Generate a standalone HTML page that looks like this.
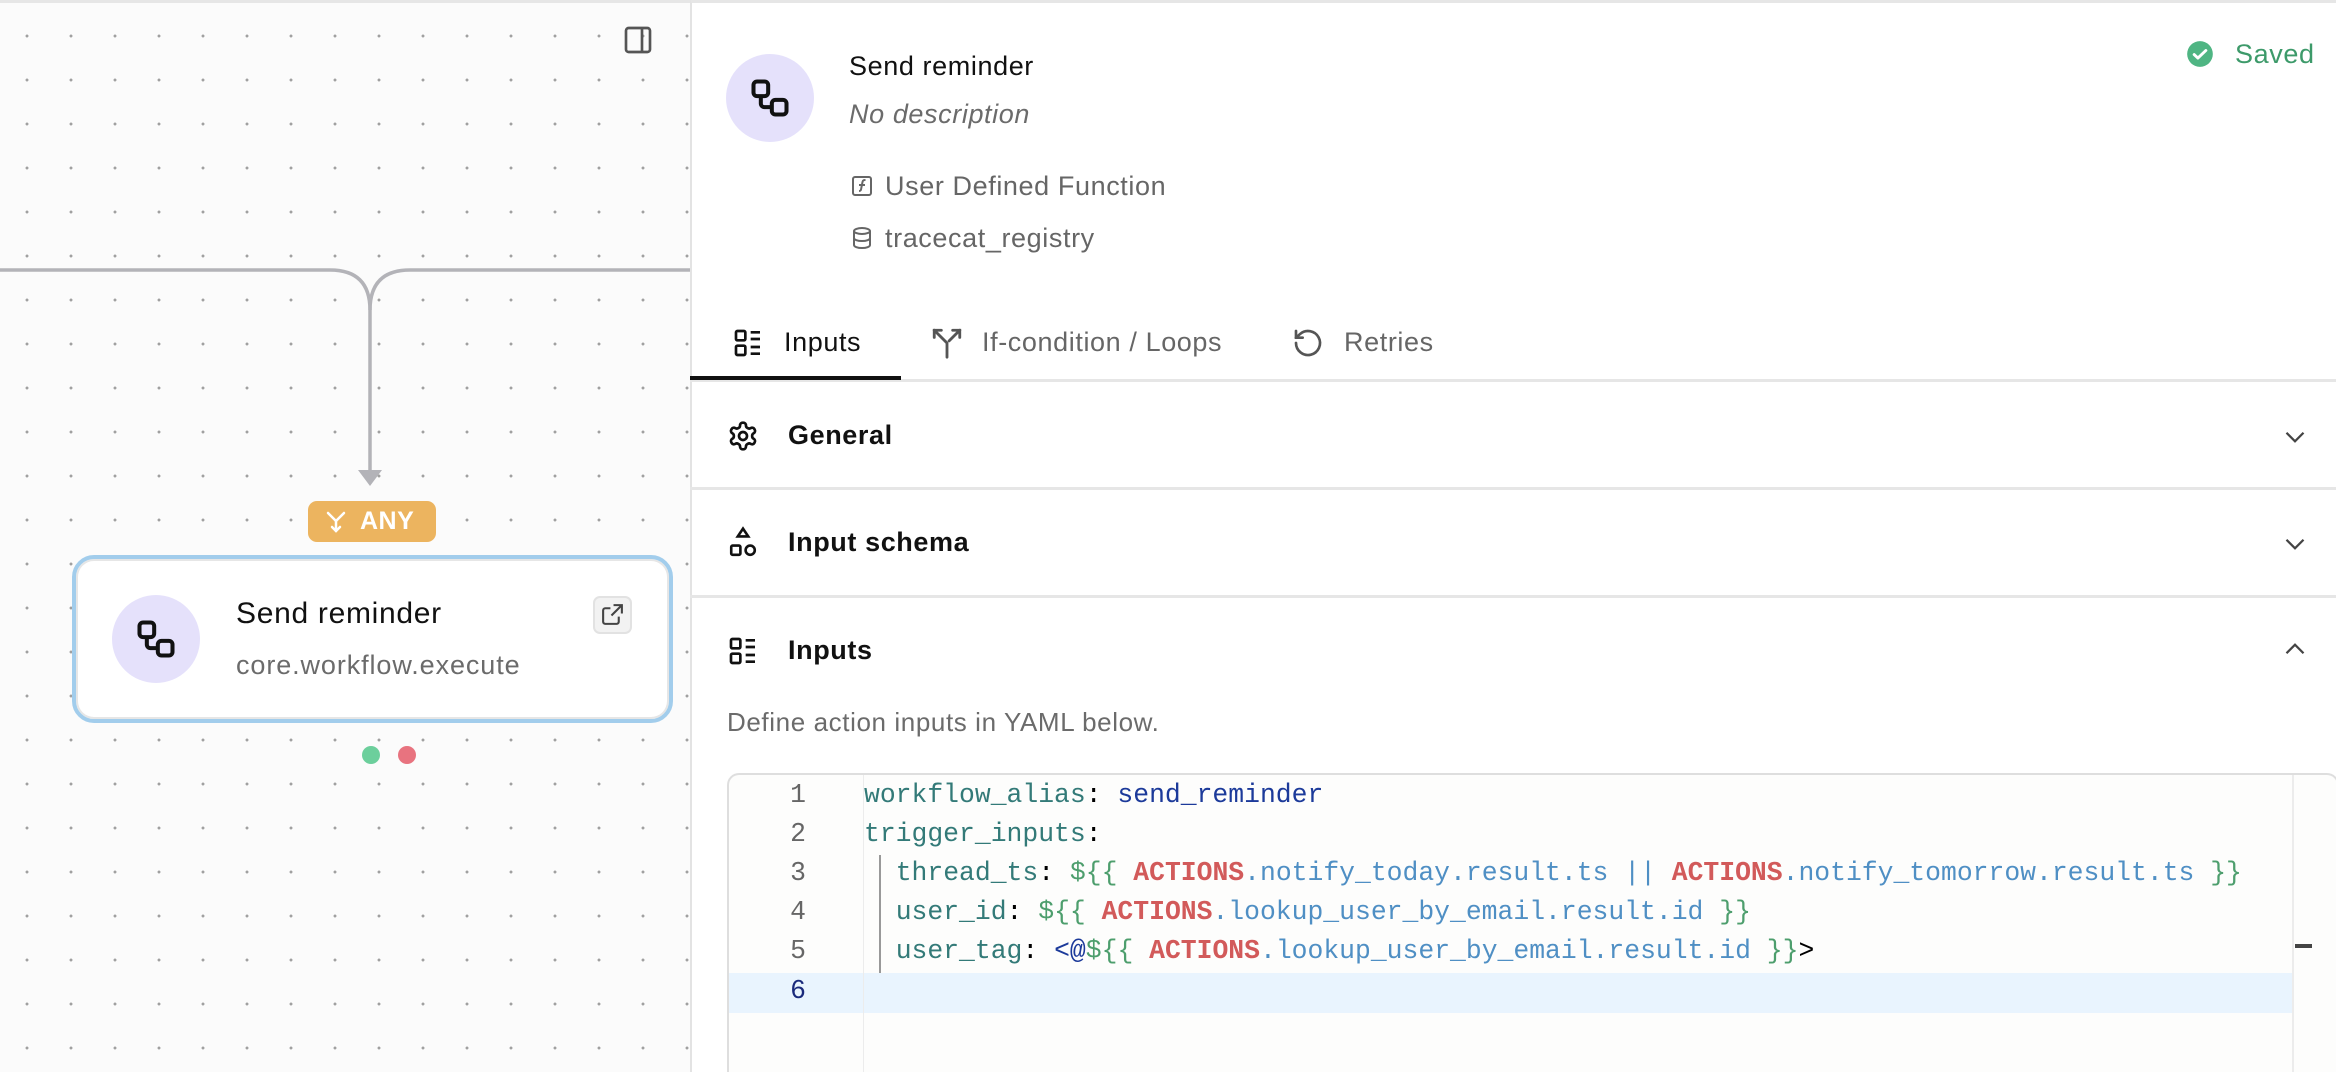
<!DOCTYPE html>
<html><head><meta charset="utf-8"><style>
*{margin:0;padding:0;box-sizing:border-box}
html,body{width:2336px;height:1072px;overflow:hidden}
body{font-family:"Liberation Sans",sans-serif;background:#fff;position:relative}
.abs{position:absolute}
#left{left:0;top:0;width:690px;height:1072px;background-color:#fbfbfb;background-image:radial-gradient(circle,#a0a0a0 1.3px,transparent 1.6px);background-size:44px 44px;background-position:5px 11px;border-top:3px solid #e6e6e6}
#right{left:690px;top:0;width:1646px;height:1072px;background:#fff;border-left:2px solid #e3e3e3;border-top:3px solid #e6e6e6}
.t{position:absolute;white-space:pre}
.s{letter-spacing:0.6px}
.mono{font-family:"Liberation Mono","DejaVu Sans Mono",monospace;font-size:26.4px;white-space:pre}
.k{color:#337a78}.v{color:#1c3a9a}.g{color:#4d9e6d}.r{color:#d25a5a;font-weight:bold}.b{color:#4f8fc4}
.ln{position:absolute;width:40px;text-align:right;left:766px;color:#666;font-family:"Liberation Mono",monospace;font-size:26.4px}
</style></head><body>
<div id="left" class="abs"></div>
<svg class="abs" style="left:622px;top:24px" width="32" height="32" viewBox="0 0 24 24" fill="none" stroke="#555" stroke-width="2"><rect x="3" y="3" width="18" height="18" rx="2"/><line x1="15" y1="3" x2="15" y2="21"/></svg>
<svg class="abs" style="left:0;top:0" width="690" height="500" fill="none" stroke="#b3b3b8" stroke-width="3.5">
<path d="M0 270 H330 Q370 270 370 310"/>
<path d="M690 270 H410 Q370 270 370 310 V472"/>
<path d="M358 470 L382 470 L370 486 Z" fill="#b3b3b8" stroke="none"/>
</svg>
<div class="abs" style="left:308px;top:501px;width:128px;height:41px;background:#ecb45f;border-radius:9px;color:#fff;font-weight:bold;font-size:25px;line-height:41px">
<svg class="abs" style="left:18px;top:10px" width="20" height="22" viewBox="0 0 20 22" fill="none" stroke="#fff" stroke-width="2.5" stroke-linecap="round"><path d="M2 2 L10 10 L18 2"/><path d="M10 10 V20"/><path d="M6 16 L10 20 L14 16"/></svg>
<span class="t" style="left:52px;letter-spacing:0.5px">ANY</span></div>
<div class="abs" style="left:72px;top:555px;width:601px;height:168px;background:#fff;border:4px solid #a2cdec;border-radius:22px;box-shadow:inset 0 0 0 2px #e6e6e6"></div>
<div class="abs" style="left:112px;top:595px;width:88px;height:88px;border-radius:50%;background:#e5e1fb"></div>
<svg class="abs" style="left:134px;top:617px" width="44" height="44" viewBox="0 0 24 24" fill="none" stroke="#111" stroke-width="2.2" stroke-linejoin="round"><rect x="3" y="3" width="8" height="8" rx="2"/><rect x="13" y="13" width="8" height="8" rx="2"/><path d="M7 11v4a2 2 0 0 0 2 2h4"/></svg>
<div class="t" style="left:236px;top:597px;font-size:30px;color:#111;letter-spacing:0.7px">Send reminder</div>
<div class="t" style="left:236px;top:650px;font-size:27px;color:#6b6b6b;letter-spacing:0.9px">core.workflow.execute</div>
<div class="abs" style="left:593px;top:596px;width:39px;height:38px;border:2px solid #e2e2e2;background:#f2f2f2;border-radius:7px"></div>
<svg class="abs" style="left:600px;top:602px" width="25" height="25" viewBox="0 0 24 24" fill="none" stroke="#444" stroke-width="2"><path d="M13 3h8v8"/><path d="M21 3 11 13"/><path d="M18 14v5a2 2 0 0 1-2 2H5a2 2 0 0 1-2-2V8a2 2 0 0 1 2-2h5"/></svg>
<div class="abs" style="left:362px;top:746px;width:18px;height:18px;border-radius:50%;background:#6ccf9c"></div>
<div class="abs" style="left:398px;top:746px;width:18px;height:18px;border-radius:50%;background:#e8737f"></div>

<div id="right" class="abs"></div>
<div class="abs" style="left:726px;top:54px;width:88px;height:88px;border-radius:50%;background:#e5e1fb"></div>
<svg class="abs" style="left:748px;top:76px" width="44" height="44" viewBox="0 0 24 24" fill="none" stroke="#111" stroke-width="2.2" stroke-linejoin="round"><rect x="3" y="3" width="8" height="8" rx="2"/><rect x="13" y="13" width="8" height="8" rx="2"/><path d="M7 11v4a2 2 0 0 0 2 2h4"/></svg>
<div class="t s" style="left:849px;top:51px;font-size:27px;color:#111">Send reminder</div>
<div class="t s" style="left:849px;top:99px;font-size:27px;color:#6b6b6b;font-style:italic">No description</div>
<svg class="abs" style="left:850px;top:174px" width="24" height="24" viewBox="0 0 24 24" fill="none" stroke="#666" stroke-width="2"><rect x="3" y="3" width="18" height="18" rx="2"/><path d="M9 17c2 0 2-1 2.5-4l1-5c.4-2 1.5-2 3-2M9 11h6"/></svg>
<div class="t s" style="left:885px;top:171px;font-size:27px;color:#666">User Defined Function</div>
<svg class="abs" style="left:850px;top:226px" width="24" height="24" viewBox="0 0 24 24" fill="none" stroke="#666" stroke-width="2"><ellipse cx="12" cy="5" rx="8" ry="3"/><path d="M4 5v14c0 1.7 3.6 3 8 3s8-1.3 8-3V5"/><path d="M4 12c0 1.7 3.6 3 8 3s8-1.3 8-3"/></svg>
<div class="t s" style="left:885px;top:223px;font-size:27px;color:#666">tracecat_registry</div>
<svg class="abs" style="left:2186px;top:40px" width="28" height="28" viewBox="0 0 24 24"><circle cx="12" cy="12" r="11" fill="#4fb583"/><path d="M7 12.5l3.2 3L17 9" fill="none" stroke="#fff" stroke-width="2.5" stroke-linecap="round" stroke-linejoin="round"/></svg>
<div class="t s" style="left:2235px;top:39px;font-size:27px;color:#3d9a6a">Saved</div>
<svg class="abs" style="left:732px;top:327px" width="32" height="32" viewBox="0 0 24 24" fill="none" stroke="#111" stroke-width="2"><rect x="3" y="3" width="7" height="7" rx="1"/><rect x="3" y="14" width="7" height="7" rx="1"/><path d="M14 4h7M14 9h7M14 15h7M14 20h7"/></svg>
<div class="t s" style="left:784px;top:327px;font-size:27px;color:#111">Inputs</div>
<svg class="abs" style="left:930px;top:326px" width="34" height="34" viewBox="0 0 24 24" fill="none" stroke="#555" stroke-width="2" stroke-linecap="round"><path d="M16 3h5v5M8 3H3v5"/><path d="M21 3l-7.5 7.5M3 3l9 9v10"/></svg>
<div class="t s" style="left:982px;top:327px;font-size:27px;color:#666">If-condition / Loops</div>
<svg class="abs" style="left:1292px;top:327px" width="32" height="32" viewBox="0 0 24 24" fill="none" stroke="#555" stroke-width="2" stroke-linecap="round"><path d="M3 12a9 9 0 1 0 3-6.7L3 8"/><path d="M3 3v5h5"/></svg>
<div class="t s" style="left:1344px;top:327px;font-size:27px;color:#666">Retries</div>
<div class="abs" style="left:690px;top:379px;width:1646px;height:3px;background:#e6e6e6"></div>
<div class="abs" style="left:690px;top:376px;width:211px;height:4px;background:#111"></div>
<svg class="abs" style="left:727px;top:420px" width="32" height="32" viewBox="0 0 24 24" fill="none" stroke="#111" stroke-width="2"><path d="M12.22 2h-.44a2 2 0 0 0-2 2v.18a2 2 0 0 1-1 1.73l-.43.25a2 2 0 0 1-2 0l-.15-.08a2 2 0 0 0-2.73.73l-.22.38a2 2 0 0 0 .73 2.73l.15.1a2 2 0 0 1 1 1.72v.51a2 2 0 0 1-1 1.74l-.15.09a2 2 0 0 0-.73 2.73l.22.38a2 2 0 0 0 2.73.73l.15-.08a2 2 0 0 1 2 0l.43.25a2 2 0 0 1 1 1.73V20a2 2 0 0 0 2 2h.44a2 2 0 0 0 2-2v-.18a2 2 0 0 1 1-1.73l.43-.25a2 2 0 0 1 2 0l.15.08a2 2 0 0 0 2.73-.73l.22-.39a2 2 0 0 0-.73-2.73l-.15-.08a2 2 0 0 1-1-1.74v-.5a2 2 0 0 1 1-1.74l.15-.09a2 2 0 0 0 .73-2.73l-.22-.38a2 2 0 0 0-2.73-.73l-.15.08a2 2 0 0 1-2 0l-.43-.25a2 2 0 0 1-1-1.73V4a2 2 0 0 0-2-2z"/><circle cx="12" cy="12" r="3"/></svg>
<div class="t s" style="left:788px;top:420px;font-size:27px;font-weight:bold;color:#111">General</div>
<svg class="abs" style="left:2278px;top:420px" width="34" height="34" viewBox="0 0 24 24" fill="none" stroke="#444" stroke-width="1.6"><path d="M6 9l6 6 6-6"/></svg>
<div class="abs" style="left:690px;top:487px;width:1646px;height:3px;background:#e6e6e6"></div>
<svg class="abs" style="left:727px;top:526px" width="32" height="34" viewBox="0 0 24 26" fill="none" stroke="#111" stroke-width="2"><path d="M12 2l4 6H8z"/><rect x="3" y="15" width="7" height="7" rx="1"/><circle cx="17.5" cy="18.5" r="3.5"/></svg>
<div class="t s" style="left:788px;top:527px;font-size:27px;font-weight:bold;color:#111">Input schema</div>
<svg class="abs" style="left:2278px;top:527px" width="34" height="34" viewBox="0 0 24 24" fill="none" stroke="#444" stroke-width="1.6"><path d="M6 9l6 6 6-6"/></svg>
<div class="abs" style="left:690px;top:595px;width:1646px;height:3px;background:#e6e6e6"></div>
<svg class="abs" style="left:727px;top:635px" width="32" height="32" viewBox="0 0 24 24" fill="none" stroke="#111" stroke-width="2"><rect x="3" y="3" width="7" height="7" rx="1"/><rect x="3" y="14" width="7" height="7" rx="1"/><path d="M14 4h7M14 9h7M14 15h7M14 20h7"/></svg>
<div class="t s" style="left:788px;top:635px;font-size:27px;font-weight:bold;color:#111">Inputs</div>
<svg class="abs" style="left:2278px;top:632px" width="34" height="34" viewBox="0 0 24 24" fill="none" stroke="#444" stroke-width="1.6"><path d="M6 15l6-6 6 6"/></svg>
<div class="t s" style="left:727px;top:707px;font-size:26px;color:#6b6b6b">Define action inputs in YAML below.</div>
<div class="abs" style="left:727px;top:773px;width:1612px;height:310px;border:2px solid #dedede;border-bottom:none;border-radius:12px 12px 0 0;background:#fdfdfc"></div>
<div class="abs" style="left:729px;top:973px;width:1563px;height:40px;background:#e9f4fe"></div>
<div class="abs" style="left:863px;top:775px;width:1px;height:300px;background:#ececec"></div>
<div class="abs" style="left:2292px;top:775px;width:2px;height:300px;background:#ececec"></div>
<div class="abs" style="left:2295px;top:944px;width:17px;height:4px;background:#444"></div>
<div class="abs" style="left:879px;top:855px;width:2px;height:118px;background:#999"></div>
<div class="ln" style="top:780px">1</div>
<div class="ln" style="top:819px">2</div>
<div class="ln" style="top:858px">3</div>
<div class="ln" style="top:897px">4</div>
<div class="ln" style="top:936px">5</div>
<div class="ln" style="top:976px;color:#1a2a7c">6</div>
<div class="t mono" style="left:864px;top:780px"><span class="k">workflow_alias</span>: <span class="v">send_reminder</span></div>
<div class="t mono" style="left:864px;top:819px"><span class="k">trigger_inputs</span>:</div>
<div class="t mono" style="left:864px;top:858px">  <span class="k">thread_ts</span>: <span class="g">${{</span> <span class="r">ACTIONS</span><span class="b">.notify_today.result.ts || </span><span class="r">ACTIONS</span><span class="b">.notify_tomorrow.result.ts</span> <span class="g">}}</span></div>
<div class="t mono" style="left:864px;top:897px">  <span class="k">user_id</span>: <span class="g">${{</span> <span class="r">ACTIONS</span><span class="b">.lookup_user_by_email.result.id</span> <span class="g">}}</span></div>
<div class="t mono" style="left:864px;top:936px">  <span class="k">user_tag</span>: <span class="v">&lt;@</span><span class="g">${{</span> <span class="r">ACTIONS</span><span class="b">.lookup_user_by_email.result.id</span> <span class="g">}}</span>&gt;</div>
</body></html>
